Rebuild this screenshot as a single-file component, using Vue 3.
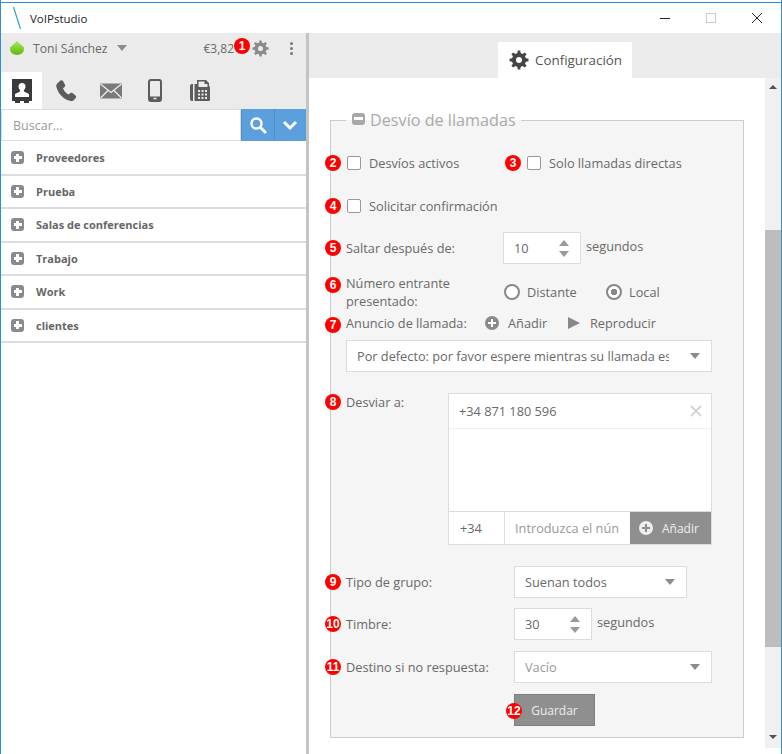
<template>
  <div class="window">
    <div class="titlebar">
      <svg class="logo" width="12" height="24" viewBox="0 0 12 24"><path d="M1.5 1 L8.5 23" stroke="#2ba6cb" stroke-width="1.2" fill="none" /></svg>
      <span class="app-name">VoIPstudio</span>
      <div class="win-controls">
        <svg width="12" height="12" viewBox="0 0 12 12"><path d="M1 6.5H11" stroke="#222" stroke-width="1" /></svg>
        <svg width="12" height="12" viewBox="0 0 12 12"><rect x="1.5" y="1.5" width="9" height="9" fill="none" stroke="#ccc" /></svg>
        <svg width="12" height="12" viewBox="0 0 12 12"><path d="M1 1L11 11M11 1L1 11" stroke="#222" stroke-width="1" /></svg>
      </div>
    </div>

    <div class="body">
      <aside class="sidebar">
        <div class="user-bar">
          <svg class="presence" width="16" height="16" viewBox="0 0 16 16">
            <defs>
              <linearGradient id="presence-fill" x1="0" y1="0" x2="0" y2="1">
                <stop offset="0" stop-color="#a9e85c" />
                <stop offset="1" stop-color="#5fb80c" />
              </linearGradient>
            </defs>
            <path d="M8 1L15 7.5Q15.500 14.500 8 15Q.5 14.500 1 7.5Z" fill="url(#presence-fill)" />
          </svg>
          <span class="user-name">Toni Sánchez</span>
          <span class="caret"></span>
          <span class="balance">€3,82<span class="badge badge-over">1</span></span>
          <svg class="cog" width="17" height="17" viewBox="0 0 24 24"><path fill="#8a8a8a" fill-rule="evenodd" :d="gearPath" /></svg>
          <span class="kebab"><i></i><i></i><i></i></span>
        </div>

        <div class="tabs">
          <div class="tab active">
            <svg width="24" height="28" viewBox="0 0 24 28"><path fill="#3a3a3a" d="M2 2h20v22h-3v2h-5v-2h-4v2H5v-2H2zM12 6a3.5 3.5 0 0 0-3.5 3.5c0 1.800 1 2.800 1.500 3.500v1.500L5 17v3h14v-3l-5-2.500V13c.5-.7 1.500-1.700 1.500-3.500A3.5 3.5 0 0 0 12 6z" fill-rule="evenodd" /></svg>
          </div>
          <div class="tab">
            <svg width="24" height="24" viewBox="0 0 24 24"><path fill="#5c5c5c" d="M6.5 1.5c1-.6 2-.3 2.500.6l2 3.600c.4.8.2 1.700-.5 2.300L9 9.200c1 2.600 3 5 5.600 6.300l1.600-1.300c.7-.6 1.600-.6 2.300-.1l3 2.400c.8.700.9 1.800.2 2.600l-1.700 2c-.8.900-2 1.300-3.200 1C9.500 20.600 3.800 14.500 2.300 7.500c-.2-1.200.2-2.400 1.200-3.200z" /></svg>
          </div>
          <div class="tab">
            <svg width="24" height="18" viewBox="0 0 24 18"><rect width="22" height="15" x="1" y="1.5" fill="#7a7a7a" /><path d="M1.5 2L12 10.5 22.5 2M1.5 16L9 8.5M22.5 16L15 8.5" stroke="#eee" stroke-width="1.2" fill="none" /></svg>
          </div>
          <div class="tab">
            <svg width="16" height="24" viewBox="0 0 16 24"><rect x="2" y="1" width="12" height="21" rx="2" fill="none" stroke="#5c5c5c" stroke-width="2" /><rect x="2" y="17.5" width="12" height="4" fill="#5c5c5c" /><rect x="6.5" y="18.8" width="3" height="1.5" fill="#eee" /></svg>
          </div>
          <div class="tab">
            <svg width="22" height="24" viewBox="0 0 22 24"><path fill="#5c5c5c" fill-rule="evenodd" d="M1 7a2 2 0 0 1 2-2h1v17H3a2 2 0 0 1-2-2zM5.5 5H8V1h9l3 3v3a1.5 1.5 0 0 1 1 1.500V21a1 1 0 0 1-1 1H5.5zM9.5 2.5V8h9V5h-3V2.500zM9 11v2h2v-2zm3.500 0v2h2v-2zm3.500 0v2h2v-2zM9 14.500v2h2v-2zm3.500 0v2h2v-2zm3.500 0v2h2v-2zM9 18v2h2v-2zm3.500 0v2h2v-2zm3.500 0v2h2v-2z" /></svg>
          </div>
        </div>

        <div class="search">
          <input class="search-input" placeholder="Buscar..." />
          <button class="search-btn">
            <svg width="18" height="18" viewBox="0 0 18 18"><circle cx="7.5" cy="7.5" r="5" fill="none" stroke="#fff" stroke-width="2.4" /><path d="M11.5 11.5L16 16" stroke="#fff" stroke-width="3" stroke-linecap="round" /></svg>
          </button>
          <button class="search-btn">
            <svg width="16" height="12" viewBox="0 0 16 12"><path d="M2 3L8 9L14 3" stroke="#fff" stroke-width="3" fill="none" /></svg>
          </button>
        </div>

        <ul class="groups">
          <li v-for="g in groups" :key="g" class="group">
            <span class="plus-box"></span>
            <span class="group-name">{{ g }}</span>
          </li>
        </ul>
      </aside>

      <div class="splitter"></div>

      <main class="main">
        <div class="main-tabs">
          <div class="main-tab">
            <svg width="20" height="20" viewBox="0 0 24 24"><path fill="#444" fill-rule="evenodd" :d="gearPath" /></svg>
            <span>Configuración</span>
          </div>
        </div>

        <div class="content">
          <div class="scroll-area">
            <fieldset class="panel">
              <legend class="panel-title"><span class="minus-box"></span>Desvío de llamadas</legend>

              <div class="row row-checks">
                <label class="check check-first"><span class="badge">2</span><span class="box"></span>Desvíos activos</label>
                <label class="check"><span class="badge">3</span><span class="box"></span>Solo llamadas directas</label>
              </div>

              <div class="row row-confirm">
                <label class="check"><span class="badge">4</span><span class="box"></span>Solicitar confirmación</label>
              </div>

              <div class="row row-skip">
                <span class="lbl lbl-skip"><span class="badge">5</span>Saltar después de:</span>
                <div class="spinner">
                  <span>10</span>
                  <span class="arrows"><i class="up"></i><i class="down"></i></span>
                </div>
                <span class="unit">segundos</span>
              </div>

              <div class="row row-number">
                <span class="lbl lbl-number"><span class="badge">6</span>Número entrante<br />presentado:</span>
                <span class="radio"></span><span class="radio-text radio-text-first">Distante</span>
                <span class="radio on"></span><span class="radio-text">Local</span>
              </div>

              <div class="row row-announce">
                <span class="lbl lbl-announce"><span class="badge">7</span>Anuncio de llamada:</span>
                <span class="plus-round"></span><span class="action action-first">Añadir</span>
                <span class="play"></span><span class="action">Reproducir</span>
              </div>

              <div class="select select-wide">
                <span class="select-text">Por defecto: por favor espere mientras su llamada es transferida</span>
                <span class="caret"></span>
              </div>

              <div class="row row-forward">
                <span class="lbl lbl-forward"><span class="badge">8</span>Desviar a:</span>
                <div class="forward-box">
                  <div class="forward-item">
                    <span>+34 871 180 596</span>
                    <svg width="12" height="12" viewBox="0 0 12 12"><path d="M1 1L11 11M11 1L1 11" stroke="#d4d4d4" stroke-width="2" /></svg>
                  </div>
                  <div class="forward-empty"></div>
                  <div class="forward-add">
                    <span class="prefix">+34</span>
                    <span class="number-input">Introduzca el nún</span>
                    <span class="add-btn"><span class="plus-round light"></span>Añadir</span>
                  </div>
                </div>
              </div>

              <div class="row row-type">
                <span class="lbl lbl-wide"><span class="badge">9</span>Tipo de grupo:</span>
                <div class="select select-type">
                  <span class="select-text">Suenan todos</span>
                  <span class="caret"></span>
                </div>
              </div>

              <div class="row row-ring">
                <span class="lbl lbl-wide"><span class="badge">10</span>Timbre:</span>
                <div class="spinner">
                  <span>30</span>
                  <span class="arrows"><i class="up"></i><i class="down"></i></span>
                </div>
                <span class="unit">segundos</span>
              </div>

              <div class="row row-dest">
                <span class="lbl lbl-wide"><span class="badge">11</span>Destino si no respuesta:</span>
                <div class="select select-dest">
                  <span class="select-text muted">Vacío</span>
                  <span class="caret"></span>
                </div>
              </div>

              <div class="row row-save">
                <button class="save"><span class="badge">12</span>Guardar</button>
              </div>
            </fieldset>
          </div>

          <div class="scrollbar">
            <span class="sb-up"></span>
            <div class="sb-track"><div class="sb-thumb"></div></div>
            <span class="sb-down"></span>
          </div>
        </div>
      </main>
    </div>
  </div>
</template>

<script setup>
const groups = ['Proveedores', 'Prueba', 'Salas de conferencias', 'Trabajo', 'Work', 'clientes']

// eight-tooth cog, used in the user bar and on the settings tab
const makeGear = (teeth, outer, root, hole) => {
  const pt = (r, a) => `${(12 + r * Math.cos(a)).toFixed(2)} ${(12 + r * Math.sin(a)).toFixed(2)}`
  const step = (Math.PI * 2) / teeth
  let d = ''
  for (let i = 0; i < teeth; i++) {
    const a = i * step
    d += `${i ? 'L' : 'M'}${pt(root, a - step * 0.3)}L${pt(outer, a - step * 0.17)}L${pt(outer, a + step * 0.17)}L${pt(root, a + step * 0.3)}`
  }
  d += `ZM${12 + hole} 12A${hole} ${hole} 0 1 0 ${12 - hole} 12A${hole} ${hole} 0 1 0 ${12 + hole} 12Z`
  return d
}

const gearPath = makeGear(8, 11.5, 8.5, 3.6)
</script>

<style scoped>
.window {
  width: 782px;
  height: 754px;
  box-sizing: border-box;
  padding-top: 3px;
  background: linear-gradient(#fff 2px, #2b90d9 2px, #2b90d9 3px, #fff 3px);
  border-left: 1px solid #2b90d9;
  border-right: 1px solid #2b90d9;
  display: flex;
  flex-direction: column;
  font-family: "Open Sans", sans-serif;
  font-size: 12.75px;
  color: #696969;
  overflow: hidden;
}

.titlebar {
  height: 30px;
  display: flex;
  align-items: center;
  flex-shrink: 0;
}

.logo {
  margin-left: 11px;
}

.app-name {
  margin-left: 6px;
  font-size: 11.5px;
  color: #222;
}

.win-controls {
  margin-left: auto;
  display: flex;
  gap: 34px;
  margin-right: 18px;
}

.body {
  flex: 1;
  display: flex;
  min-height: 0;
}

.sidebar {
  width: 305px;
  background: #fff;
  display: flex;
  flex-direction: column;
}

.user-bar {
  height: 39px;
  box-sizing: border-box;
  padding: 0 0 9px 8px;
  background: #ebebeb;
  display: flex;
  align-items: center;
}

.user-name {
  margin-left: 8px;
  font-size: 12.2px;
  color: #696969;
}

.caret {
  width: 0;
  height: 0;
  border-left: 5px solid transparent;
  border-right: 5px solid transparent;
  border-top: 6px solid #8c8c8c;
  margin-left: 9px;
}

.balance {
  margin-left: auto;
  font-size: 12px;
  position: relative;
  margin-right: 18px;
}

.cog {
  margin-right: 21px;
}

.kebab {
  display: flex;
  flex-direction: column;
  gap: 2px;
  margin-right: 13px;
}

.kebab i {
  width: 3px;
  height: 3px;
  background: #777;
  border-radius: 50%;
}

.tabs {
  height: 37px;
  background: #ebebeb;
  display: flex;
}

.tab {
  width: 41px;
  margin-right: 3.5px;
  display: flex;
  align-items: center;
  justify-content: center;
}

.tab.active {
  background: #fff;
}

.search {
  height: 32px;
  display: flex;
  background: #ebebeb;
}

.search-input {
  flex: 1;
  min-width: 0;
  box-sizing: border-box;
  border: 1px solid #ddd;
  padding: 0 11px;
  font: 12.5px "Open Sans", sans-serif;
  color: #666;
  outline: none;
}

.search-input::placeholder {
  color: #999;
}

.search-btn {
  width: 32.5px;
  margin: 0;
  padding: 0;
  border: none;
  border-left: 1px solid #4c8fc9;
  background: #5b9fdc;
  display: flex;
  align-items: center;
  justify-content: center;
}

.groups {
  list-style: none;
  margin: 0;
  padding: 1px 0 0;
}

.group {
  height: 31.5px;
  border-bottom: 2px solid #ddd;
  display: flex;
  align-items: center;
  padding-left: 10px;
}

.plus-box {
  width: 13px;
  height: 13px;
  border-radius: 3px;
  background:
    linear-gradient(#fff, #fff) center / 8px 3px no-repeat,
    linear-gradient(#fff, #fff) center / 3px 8px no-repeat,
    #8a8a8a;
}

.group-name {
  margin-left: 12px;
  font-size: 11px;
  font-weight: 700;
  color: #666;
}

.splitter {
  width: 3px;
  background: #c4c4c4;
}

.main {
  flex: 1;
  min-width: 0;
  display: flex;
  flex-direction: column;
}

.main-tabs {
  height: 45px;
  background: #ebebeb;
  padding-left: 189px;
  display: flex;
  align-items: flex-end;
}

.main-tab {
  width: 134px;
  height: 36px;
  box-sizing: border-box;
  padding-left: 11px;
  background: #fff;
  display: flex;
  align-items: center;
  gap: 6px;
  font-size: 13.4px;
  color: #555;
}

.content {
  flex: 1;
  display: flex;
  min-height: 0;
}

.scroll-area {
  flex: 1;
  padding: 32px 0 0 21px;
  min-width: 0;
}

.panel {
  margin: 0;
  width: 414px;
  box-sizing: border-box;
  height: 628px;
  padding: 0 0 0 15px;
  background: #f5f5f5;
  border: 1px solid #ccc;
  min-inline-size: 0;
}

.panel-title {
  padding: 0 5px 0 6px;
  font-size: 16.2px;
  line-height: 20px;
  color: #aaa;
  display: flex;
  align-items: center;
  gap: 5px;
}

.minus-box {
  width: 13px;
  height: 12px;
  border-radius: 3px;
  margin-top: -3px;
  background: linear-gradient(#fff, #fff) center / 9px 3px no-repeat, #a8a8a8;
}

.row {
  display: flex;
  align-items: center;
}

.badge {
  position: absolute;
  left: -21px;
  top: 50%;
  transform: translateY(-50%);
  width: 16px;
  height: 16px;
  border-radius: 50%;
  background: #f00;
  color: #fff;
  font: 700 12px/16px "Liberation Sans", sans-serif;
  text-align: center;
}

.badge-over {
  left: auto;
  right: -16px;
  top: calc(50% - 2px);
}

.check {
  position: relative;
  display: flex;
  align-items: center;
  line-height: 18px;
}

.check-first {
  width: 180px;
}

.box {
  width: 14px;
  height: 14px;
  box-sizing: border-box;
  border: 1px solid #999;
  border-radius: 2px;
  background: #fff;
  margin-left: 1px;
  margin-right: 8px;
}

.row-checks {
  padding-top: 24px;
  height: 18px;
}

.row-confirm {
  margin-top: 25px;
  height: 18px;
}

.row-skip {
  margin-top: 17px;
  height: 32px;
}

.lbl {
  position: relative;
  line-height: 18px;
}

.lbl-skip {
  width: 157px;
}

.lbl-number {
  width: 158px;
}

.lbl-number .badge {
  top: 11px;
}

.spinner {
  width: 78px;
  height: 32px;
  box-sizing: border-box;
  border: 1px solid #ddd;
  background: #fff;
  display: flex;
  align-items: center;
  justify-content: space-between;
  padding: 0 11px 0 10px;
}

.arrows {
  display: flex;
  flex-direction: column;
  gap: 5px;
}

.arrows i {
  width: 0;
  height: 0;
  border-left: 5px solid transparent;
  border-right: 5px solid transparent;
}

.arrows .up {
  border-bottom: 6px solid #999;
}

.arrows .down {
  border-top: 6px solid #999;
}

.unit {
  margin-left: 5px;
  margin-top: -4px;
}

.row-number {
  margin-top: 10px;
  height: 36px;
}

.radio {
  width: 16px;
  height: 16px;
  box-sizing: border-box;
  border: 2.5px solid #888;
  border-radius: 50%;
  background: #fff;
  flex-shrink: 0;
}

.radio.on {
  background: radial-gradient(circle, #888 3px, #fff 3.5px);
}

.radio-text {
  margin-left: 7px;
}

.radio-text-first {
  width: 79px;
}

.row-announce {
  margin-top: 3px;
  height: 20px;
}

.lbl-announce {
  width: 139px;
}

.lbl-announce .badge {
  top: calc(50% + 2px);
}

.plus-round {
  width: 14px;
  height: 14px;
  border-radius: 50%;
  background:
    linear-gradient(#fff, #fff) center / 8px 2px no-repeat,
    linear-gradient(#fff, #fff) center / 2px 8px no-repeat,
    #8a8a8a;
  flex-shrink: 0;
}

.action {
  margin-left: 9px;
}

.action-first {
  width: 60px;
}

.play {
  width: 0;
  height: 0;
  border-left: 12px solid #888;
  border-top: 6px solid transparent;
  border-bottom: 6px solid transparent;
  margin-right: 1px;
}

.select {
  height: 32px;
  box-sizing: border-box;
  border: 1px solid #ddd;
  background: #fff;
  display: flex;
  align-items: center;
  padding: 0 11px 0 10px;
}

.select .caret {
  margin-left: auto;
  flex-shrink: 0;
}

.select-text {
  white-space: nowrap;
  overflow: hidden;
}

.select-wide {
  width: 366px;
  margin-top: 7px;
}

.select-wide .select-text {
  width: 312px;
}

.muted {
  color: #999;
}

.row-forward {
  margin-top: 21px;
  align-items: flex-start;
}

.lbl-forward {
  width: 102px;
}

.forward-box {
  width: 264px;
  height: 152px;
  box-sizing: border-box;
  border: 1px solid #ddd;
  background: #fff;
  display: flex;
  flex-direction: column;
}

.forward-item {
  height: 35px;
  box-sizing: border-box;
  border-bottom: 1px solid #eee;
  display: flex;
  align-items: center;
  justify-content: space-between;
  padding: 0 9px 0 10px;
}

.forward-empty {
  flex: 1;
}

.forward-add {
  height: 33px;
  box-sizing: border-box;
  display: flex;
  border-top: 1px solid #ddd;
}

.prefix {
  width: 56px;
  border-right: 1px solid #ddd;
  display: flex;
  align-items: center;
  padding-left: 11px;
  box-sizing: border-box;
}

.number-input {
  width: 125px;
  display: flex;
  align-items: center;
  padding-left: 10px;
  box-sizing: border-box;
  color: #999;
  white-space: nowrap;
  overflow: hidden;
}

.add-btn {
  flex: 1;
  background: #8f8f8f;
  color: #eee;
  display: flex;
  align-items: center;
  gap: 9px;
  padding-left: 9px;
  font-size: 12px;
}

.plus-round.light {
  background:
    linear-gradient(#8f8f8f, #8f8f8f) center / 8px 2px no-repeat,
    linear-gradient(#8f8f8f, #8f8f8f) center / 2px 8px no-repeat,
    #eee;
}

.row-type {
  margin-top: 21px;
}

.lbl-wide {
  width: 168px;
}

.select-type {
  width: 173px;
}

.select-dest {
  width: 198px;
}

.row-ring {
  margin-top: 10px;
}

.row-dest {
  margin-top: 11px;
}

.row-save {
  margin-top: 11px;
  padding-left: 168px;
}

.save {
  position: relative;
  width: 81px;
  height: 32px;
  padding: 0;
  border: 1px solid #7e7e7e;
  background: #8f8f8f;
  color: #eee;
  font: 12px "Open Sans", sans-serif;
}

.save .badge {
  left: -9px;
  top: calc(50% + 1px);
}

.scrollbar {
  width: 16px;
  margin-bottom: 6px;
  background: #f0f0f0;
  display: flex;
  flex-direction: column;
  align-items: center;
}

.sb-up,
.sb-down {
  width: 0;
  height: 0;
  border-left: 4px solid transparent;
  border-right: 4px solid transparent;
}

.sb-up {
  margin: 7px 0;
  border-bottom: 4px solid #505050;
}

.sb-down {
  margin: 5px 0 9px;
  border-top: 4px solid #505050;
}

.sb-track {
  flex: 1;
  width: 100%;
}

.sb-thumb {
  margin-top: 134px;
  height: 417px;
  background: #bdbdbd;
}
</style>
